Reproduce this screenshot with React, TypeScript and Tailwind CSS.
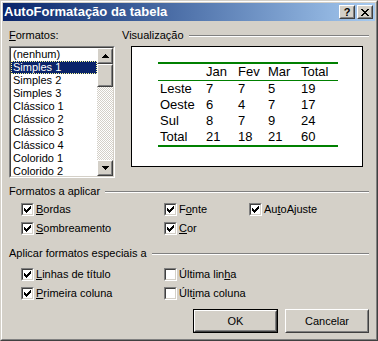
import type { ReactNode } from 'react';

const font = "font-['Liberation_Sans',Arial,sans-serif]";

function Raised({ className = '', children }: { className?: string; children?: ReactNode }) {
  return (
    <div className={`border border-t-white border-l-white border-r-[#404040] border-b-[#404040] ${className}`}>
      <div className="w-full h-full border border-t-[#d4d0c8] border-l-[#d4d0c8] border-r-[#808080] border-b-[#808080] bg-[#d4d0c8] flex items-center justify-center">
        {children}
      </div>
    </div>
  );
}

function Sunken({ className = '', children }: { className?: string; children?: ReactNode }) {
  return (
    <div className={`border border-t-[#808080] border-l-[#808080] border-r-white border-b-white ${className}`}>
      <div className="w-full h-full border border-t-[#404040] border-l-[#404040] border-r-[#d4d0c8] border-b-[#d4d0c8] bg-white overflow-hidden">
        {children}
      </div>
    </div>
  );
}

function CheckMark() {
  return (
    <svg width="7" height="7" viewBox="0 0 7 7" shapeRendering="crispEdges">
      <path d="M0 2h1v3H0z M1 3h1v3H1z M2 4h1v3H2z M3 3h1v3H3z M4 2h1v3H4z M5 1h1v3H5z M6 0h1v3H6z" fill="#000" />
    </svg>
  );
}

function Check({ checked, label }: { checked: boolean; label: ReactNode }) {
  return (
    <div className="flex items-center h-[19px]">
      <Sunken className="w-[13px] h-[13px] shrink-0">
        <div className="w-full h-full flex items-center justify-center">{checked && <CheckMark />}</div>
      </Sunken>
      <span className="ml-[2px] text-[11px] leading-[13px] text-black">{label}</span>
    </div>
  );
}

function Group({ title }: { title: string }) {
  return (
    <div className="flex items-center h-[13px]">
      <span className="text-[11px] leading-[13px] text-black whitespace-nowrap">{title}</span>
      <div className="flex-1 ml-[5px] h-[2px] border-t border-t-[#808080] border-b border-b-white" />
    </div>
  );
}

function Arrow({ up }: { up: boolean }) {
  return (
    <svg width="7" height="4" viewBox="0 0 7 4" shapeRendering="crispEdges">
      <path d={up ? 'M3 0h1v1H3z M2 1h3v1H2z M1 2h5v1H1z M0 3h7v1H0z' : 'M0 0h7v1H0z M1 1h5v1H1z M2 2h3v1H2z M3 3h1v1H3z'} fill="#000" />
    </svg>
  );
}

const items = ['(nenhum)', 'Simples 1', 'Simples 2', 'Simples 3', 'Clássico 1', 'Clássico 2', 'Clássico 3', 'Clássico 4', 'Colorido 1', 'Colorido 2'];

const rows = [
  ['', 'Jan', 'Fev', 'Mar', 'Total'],
  ['Leste', '7', '7', '5', '19'],
  ['Oeste', '6', '4', '7', '17'],
  ['Sul', '8', '7', '9', '24'],
  ['Total', '21', '18', '21', '60'],
];

export default function App() {
  return (
    <div className={`w-[378px] h-[341px] ${font} bg-[#d4d0c8] border border-t-[#d4d0c8] border-l-[#d4d0c8] border-r-[#404040] border-b-[#404040]`}>
      <div className="w-full h-full border border-t-white border-l-white border-r-[#808080] border-b-[#808080] p-[1px] flex flex-col">
        {/* title bar */}
        <div className="h-[18px] bg-linear-to-r from-[#0a246a] to-[#a6caf0] flex items-center pl-[1px] pr-[2px]">
          <span className="text-white font-bold text-[13px] leading-[14px] flex-1">AutoFormatação da tabela</span>
          <Raised className="w-[16px] h-[14px]">
            <span className="text-[11px] font-bold leading-[10px] text-black">?</span>
          </Raised>
          <Raised className="w-[16px] h-[14px] ml-[2px]">
            <svg width="8" height="7" viewBox="0 0 8 7" shapeRendering="crispEdges">
              <path d="M0 0h2v1H0z M6 0h2v1H6z M1 1h2v1H1z M5 1h2v1H5z M2 2h4v1H2z M3 3h2v1H3z M2 4h4v1H2z M1 5h2v1H1z M5 5h2v1H5z M0 6h2v1H0z M6 6h2v1H6z" fill="#000" />
            </svg>
          </Raised>
        </div>

        <div className="flex-1 px-[6px] pt-[8px] text-black">
          <div className="flex">
            <div className="w-[106px] flex flex-col">
              <span className="text-[11px] leading-[13px] h-[13px]"><u>F</u>ormatos:</span>
              <Sunken className="mt-[4px] h-[132px]">
                <div className="flex h-full">
                  <div className="flex-1 flex flex-col">
                    {items.map((it) => (
                      <div
                        key={it}
                        className={`h-[13px] shrink-0 text-[11px] leading-[11px] pl-[1px] ${it === 'Simples 1' ? 'bg-[#0a246a] text-white border border-dotted border-[#ffff99]' : 'border border-transparent'}`}
                      >
                        {it}
                      </div>
                    ))}
                  </div>
                  <div className="w-[16px] flex flex-col">
                    <Raised className="h-[16px] shrink-0"><Arrow up /></Raised>
                    <Raised className="h-[23px] shrink-0" />
                    <div className="flex-1 bg-[image:repeating-conic-gradient(#fff_0_25%,#d4d0c8_0_50%)] bg-[length:2px_2px]" />
                    <Raised className="h-[16px] shrink-0"><Arrow up={false} /></Raised>
                  </div>
                </div>
              </Sunken>
            </div>

            <div className="flex-1 ml-[7px] flex flex-col">
              <Group title="Visualização" />
              <div className="mt-[4px] ml-[9px] w-[232px] h-[121px] border border-black bg-white">
                <div className="ml-[26px] mt-[15px] w-[180px] border-t-2 border-t-[#008000] border-b-2 border-b-[#008000] text-[13px] leading-[16px]">
                  {rows.map((r, i) => (
                    <div
                      key={i}
                      className={`grid grid-cols-[46px_32px_30px_33px_1fr] pl-[2px] h-[16px] ${i === 0 ? 'h-[17px] border-b border-b-[#008000]' : ''}`}
                    >
                      {r.map((c, j) => (
                        <span key={j}>{c}</span>
                      ))}
                    </div>
                  ))}
                </div>
              </div>
            </div>
          </div>

          <div className="mt-[7px]">
            <Group title="Formatos a aplicar" />
          </div>
          <div className="grid grid-cols-[143px_85px_1fr] pl-[12px] mt-[2px]">
            <Check checked label={<><u>B</u>ordas</>} />
            <Check checked label={<>F<u>o</u>nte</>} />
            <Check checked label={<>Au<u>t</u>oAjuste</>} />
            <Check checked label={<><u>S</u>ombreamento</>} />
            <Check checked label={<><u>C</u>or</>} />
          </div>

          <div className="mt-[9px]">
            <Group title="Aplicar formatos especiais a" />
          </div>
          <div className="grid grid-cols-[143px_1fr] pl-[12px] mt-[5px]">
            <Check checked label={<><u>L</u>inhas de título</>} />
            <Check checked={false} label={<>Última lin<u>h</u>a</>} />
            <Check checked label={<><u>P</u>rimeira coluna</>} />
            <Check checked={false} label={<>Últ<u>i</u>ma coluna</>} />
          </div>

          <div className="flex justify-end mt-[6px]">
            <div className="border border-black">
              <Raised className="w-[83px] h-[22px]">
                <span className="text-[11px] leading-[13px]">OK</span>
              </Raised>
            </div>
            <Raised className="w-[84px] h-[24px] ml-[7px]">
              <span className="text-[11px] leading-[13px]">Cancelar</span>
            </Raised>
          </div>
        </div>
      </div>
    </div>
  );
}
